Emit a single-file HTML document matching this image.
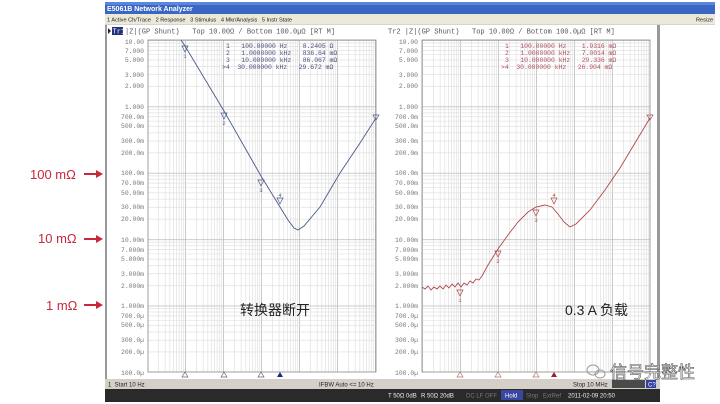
<!DOCTYPE html>
<html><head><meta charset="utf-8"><style>
html,body{margin:0;padding:0;background:#fff;width:720px;height:404px;overflow:hidden}
svg{display:block}
text{white-space:pre}
.m{font-family:"Liberation Mono","DejaVu Sans Mono",monospace}
.s{font-family:"Liberation Sans","DejaVu Sans",sans-serif}
.c{font-family:"Liberation Sans","Noto Sans CJK SC",sans-serif}
</style></head><body>
<svg width="720" height="404" viewBox="0 0 720 404" xmlns="http://www.w3.org/2000/svg" xml:space="preserve">
<defs>
<pattern id="gx1" x="147" y="0" width="38" height="404" patternUnits="userSpaceOnUse">
<g stroke="#dcdcdc" stroke-width="0.6"><line x1="11.44" y1="0" x2="11.44" y2="404"/><line x1="18.13" y1="0" x2="18.13" y2="404"/><line x1="22.88" y1="0" x2="22.88" y2="404"/><line x1="26.56" y1="0" x2="26.56" y2="404"/><line x1="29.57" y1="0" x2="29.57" y2="404"/><line x1="32.11" y1="0" x2="32.11" y2="404"/><line x1="34.32" y1="0" x2="34.32" y2="404"/><line x1="36.26" y1="0" x2="36.26" y2="404"/></g>
<line x1="0.4" y1="0" x2="0.4" y2="404" stroke="#bbb" stroke-width="0.8"/>
</pattern>
<pattern id="gx2" x="422" y="0" width="38" height="404" patternUnits="userSpaceOnUse">
<g stroke="#dcdcdc" stroke-width="0.6"><line x1="11.44" y1="0" x2="11.44" y2="404"/><line x1="18.13" y1="0" x2="18.13" y2="404"/><line x1="22.88" y1="0" x2="22.88" y2="404"/><line x1="26.56" y1="0" x2="26.56" y2="404"/><line x1="29.57" y1="0" x2="29.57" y2="404"/><line x1="32.11" y1="0" x2="32.11" y2="404"/><line x1="34.32" y1="0" x2="34.32" y2="404"/><line x1="36.26" y1="0" x2="36.26" y2="404"/></g>
<line x1="0.4" y1="0" x2="0.4" y2="404" stroke="#bbb" stroke-width="0.8"/>
</pattern>
<pattern id="gy" x="0" y="40" width="720" height="66.4" patternUnits="userSpaceOnUse">
<g stroke="#dcdcdc" stroke-width="0.6"><line x1="0" y1="3.04" x2="720" y2="3.04"/><line x1="0" y1="6.44" x2="720" y2="6.44"/><line x1="0" y1="10.29" x2="720" y2="10.29"/><line x1="0" y1="14.73" x2="720" y2="14.73"/><line x1="0" y1="19.99" x2="720" y2="19.99"/><line x1="0" y1="26.42" x2="720" y2="26.42"/><line x1="0" y1="34.68" x2="720" y2="34.68"/><line x1="0" y1="46.41" x2="720" y2="46.41"/></g>
<line x1="0" y1="0.4" x2="720" y2="0.4" stroke="#bbb" stroke-width="0.8"/>
</pattern>
</defs>

<rect x="105" y="2" width="610" height="12" fill="#3a66c4"/>
<rect x="105" y="2" width="610" height="3" fill="#5a86dc"/>
<text x="107" y="11" class="s" font-size="7" font-weight="bold" fill="#fff">E5061B Network Analyzer</text>
<rect x="105" y="14" width="610" height="10" fill="#ece9d8"/>
<text x="107" y="21.5" class="s" font-size="5.6" fill="#222">1 Active Ch/Trace   2 Response   3 Stimulus   4 Mkr/Analysis   5 Instr State</text>
<text x="696" y="21.5" class="s" font-size="5.6" fill="#222">Resize</text>
<line x1="105" y1="24.5" x2="715" y2="24.5" stroke="#aaa" stroke-width="0.6"/>
<rect x="105" y="25" width="2" height="354" fill="#999"/>
<rect x="657" y="25" width="3" height="354" fill="#999"/>

<polygon points="108,28 108,34 111,31" fill="#223"/>
<rect x="112" y="27" width="11" height="8" fill="#20307a"/>
<text x="112.5" y="33.5" class="m" font-size="7" fill="#fff">Tr1</text>
<text x="125" y="33.5" class="m" font-size="7" fill="#555">|Z|(GP Shunt)   Top 10.00Ω / Bottom 100.0µΩ [RT M]</text>
<text x="388" y="33.5" class="m" font-size="7" fill="#555">Tr2 |Z|(GP Shunt)   Top 10.00Ω / Bottom 100.0µΩ [RT M]</text>

<rect x="148" y="40" width="228" height="332" fill="url(#gx1)"/>
<rect x="148" y="40" width="228" height="332" fill="url(#gy)"/>
<rect x="148" y="40" width="228" height="332" fill="none" stroke="#888" stroke-width="0.8"/>
<rect x="422" y="40" width="228" height="332" fill="url(#gx2)"/>
<rect x="422" y="40" width="228" height="332" fill="url(#gy)"/>
<rect x="422" y="40" width="228" height="332" fill="none" stroke="#888" stroke-width="0.8"/>

<g class="m" font-size="6.4" fill="#777" text-anchor="end">
<text x="144" y="44">10.00</text><text x="144" y="53">7.000</text><text x="144" y="62">5.000</text><text x="144" y="77">3.000</text><text x="144" y="88">2.000</text>
<text x="144" y="109">1.000</text><text x="144" y="119">700.0m</text><text x="144" y="128">500.0m</text><text x="144" y="143">300.0m</text><text x="144" y="155">200.0m</text>
<text x="144" y="175">100.0m</text><text x="144" y="185">70.00m</text><text x="144" y="195">50.00m</text><text x="144" y="209">30.00m</text><text x="144" y="221">20.00m</text>
<text x="144" y="242">10.00m</text><text x="144" y="252">7.000m</text><text x="144" y="261">5.000m</text><text x="144" y="276">3.000m</text><text x="144" y="288">2.000m</text>
<text x="144" y="308">1.000m</text><text x="144" y="318">700.0µ</text><text x="144" y="327">500.0µ</text><text x="144" y="342">300.0µ</text><text x="144" y="354">200.0µ</text><text x="144" y="375">100.0µ</text>
</g>
<g class="m" font-size="6.4" fill="#777" text-anchor="end">
<text x="418" y="44">10.00</text><text x="418" y="53">7.000</text><text x="418" y="62">5.000</text><text x="418" y="77">3.000</text><text x="418" y="88">2.000</text>
<text x="418" y="109">1.000</text><text x="418" y="119">700.0m</text><text x="418" y="128">500.0m</text><text x="418" y="143">300.0m</text><text x="418" y="155">200.0m</text>
<text x="418" y="175">100.0m</text><text x="418" y="185">70.00m</text><text x="418" y="195">50.00m</text><text x="418" y="209">30.00m</text><text x="418" y="221">20.00m</text>
<text x="418" y="242">10.00m</text><text x="418" y="252">7.000m</text><text x="418" y="261">5.000m</text><text x="418" y="276">3.000m</text><text x="418" y="288">2.000m</text>
<text x="418" y="308">1.000m</text><text x="418" y="318">700.0µ</text><text x="418" y="327">500.0µ</text><text x="418" y="342">300.0µ</text><text x="418" y="354">200.0µ</text><text x="418" y="375">100.0µ</text>
</g>

<g class="m" font-size="6.4" fill="#4a4e7a">
<text x="226" y="48">1   100.00000 Hz    8.2405 Ω</text>
<text x="226" y="55">2   1.0000000 kHz   836.64 mΩ</text>
<text x="226" y="62">3   10.000000 kHz   86.067 mΩ</text>
<text x="222" y="69">&gt;4  30.000000 kHz   29.672 mΩ</text>
</g>
<g class="m" font-size="6.4" fill="#b05060">
<text x="505" y="48">1   100.00000 Hz    1.9316 mΩ</text>
<text x="505" y="55">2   1.0000000 kHz   7.0014 mΩ</text>
<text x="505" y="62">3   10.000000 kHz   29.336 mΩ</text>
<text x="501" y="69">&gt;4  30.000000 kHz   26.904 mΩ</text>
</g>

<path d="M181,40 L185,46 L224,111 L261,176 L280,207 L288,220 L294,228 L298,230 L304,226 L320,207 L340,173 L360,143 L376,118" fill="none" stroke="#4a5a8c" stroke-width="0.9"/>
<path d="M422,287 L425,289 L428,286 L431,290 L434,287 L437,289 L440,286 L443,289 L446,285 L449,288 L452,284 L455,287 L458,283 L461,287 L464,283 L467,285 L470,281 L473,283 L476,279 L479,280 L482,276 L488,265 L498,249 L508,235 L518,222 L528,212 L536,207 L545,205 L552,207 L558,214 L564,222 L570,227 L576,224 L590,210 L605,190 L620,168 L635,143 L650,118" fill="none" stroke="#b04848" stroke-width="0.9"/>

<g fill="none" stroke="#4a5a8c" stroke-width="0.7">
<polygon points="182,46 188,46 185,52"/><polygon points="221,113 227,113 224,119"/><polygon points="258,180 264,180 261,186"/><polygon points="277,198 283,198 280,204"/>
<polygon points="373,115 376,120 379,115"/>
</g>
<g class="m" font-size="5.5" fill="#4a5a8c" text-anchor="middle"><text x="185" y="58">1</text><text x="224" y="125">2</text><text x="261" y="192">3</text><text x="280" y="197">4</text></g>
<g fill="none" stroke="#b04848" stroke-width="0.7">
<polygon points="457,290 463,290 460,296"/><polygon points="495,251 501,251 498,257"/><polygon points="533,210 539,210 536,216"/><polygon points="551,198 557,198 554,204"/>
<polygon points="647,115 650,120 653,115"/>
</g>
<g class="m" font-size="5.5" fill="#b04848" text-anchor="middle"><text x="460" y="302">1</text><text x="498" y="263">2</text><text x="536" y="222">3</text><text x="554" y="197">4</text></g>

<g fill="none" stroke="#666" stroke-width="0.7"><polygon points="182,377 188,377 185,372"/><polygon points="221,377 227,377 224,372"/><polygon points="258,377 264,377 261,372"/></g>
<polygon points="277,377 283,377 280,372" fill="#1e2a78"/>
<g fill="none" stroke="#b07070" stroke-width="0.7"><polygon points="457,377 463,377 460,372"/><polygon points="495,377 501,377 498,372"/><polygon points="533,377 539,377 536,372"/></g>
<polygon points="551,377 557,377 554,372" fill="#a01c2c"/>

<text x="240" y="315" class="c" font-size="14" fill="#222">转换器断开</text>
<text x="565" y="315" class="c" font-size="14" fill="#222">0.3 A 负载</text>

<g fill="#c8283c" class="c" font-size="13">
<text x="30" y="179">100 mΩ</text><text x="38" y="243">10 mΩ</text><text x="46" y="310">1 mΩ</text>
</g>
<g stroke="#c8283c" stroke-width="2" fill="#c8283c">
<line x1="84" y1="174" x2="97" y2="174"/><polygon points="96,170 103,174 96,178" stroke="none"/>
<line x1="84" y1="239" x2="97" y2="239"/><polygon points="96,235 103,239 96,243" stroke="none"/>
<line x1="84" y1="305" x2="97" y2="305"/><polygon points="96,301 103,305 96,309" stroke="none"/>
</g>

<rect x="105" y="379" width="555" height="10" fill="#d4d0c8"/>
<g class="s" font-size="6" fill="#222"><text x="108" y="386.5">1  Start 10 Hz</text><text x="319" y="386.5">IFBW Auto &lt;= 10 Hz</text><text x="573" y="386.5">Stop 10 MHz</text></g>
<rect x="612" y="380" width="33" height="8" fill="#4a4a4a"/>
<rect x="646" y="380" width="10" height="8" fill="#3040a0"/>
<text x="648" y="386.5" class="s" font-size="6" fill="#fff">C?</text>
<rect x="105" y="389" width="555" height="13" fill="#2a2a2a"/>
<g class="s" font-size="6" fill="#eee"><text x="388" y="397.5">T 50Ω 0dB</text><text x="421" y="397.5">R 50Ω 20dB</text><text x="466" y="397.5" fill="#777">DC LF OFF</text></g>
<rect x="501" y="390" width="22" height="10" fill="#3848a0"/>
<g class="s" font-size="6"><text x="505" y="397.5" fill="#fff">Hold</text><text x="526" y="397.5" fill="#777">Stop</text><text x="543" y="397.5" fill="#777">ExtRef</text><text x="568" y="397.5" fill="#eee">2011-02-09 20:50</text></g>

<g fill="none" stroke="#999" stroke-width="1"><ellipse cx="593" cy="370" rx="6" ry="5"/><ellipse cx="600" cy="374" rx="5" ry="4"/></g>
<text x="610" y="378" class="c" font-size="17" fill="#fff" stroke="#555" stroke-width="0.6">信号完整性</text>
</svg>
</body></html>
